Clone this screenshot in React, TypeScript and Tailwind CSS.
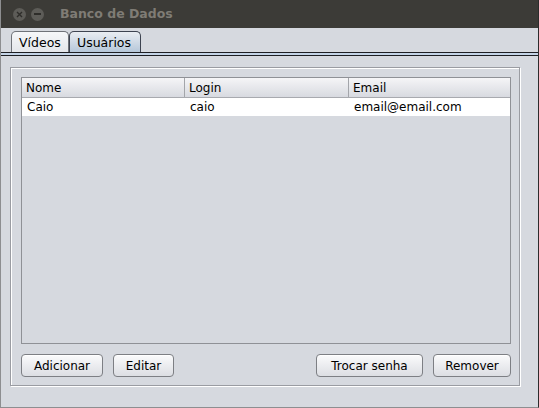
import React from "react";

const font = { fontFamily: '"DejaVu Sans", Verdana, sans-serif' };

const Button = ({ label, width }: { label: string; width: string }) => (
  <button
    className={`h-[23px] ${width} rounded-[4px] border border-[#7d7f84] bg-gradient-to-b from-[#fbfbfc] to-[#dcdee3] text-[12px] text-black shadow-[inset_0_1px_0_#fff]`}
  >
    {label}
  </button>
);

const columns = [
  { name: "Nome", width: "w-[163px]" },
  { name: "Login", width: "w-[164px]" },
  { name: "Email", width: "flex-1" },
];

const rows = [["Caio", "caio", "email@email.com"]];

export default function App() {
  return (
    <div
      style={font}
      className="w-[539px] h-[408px] bg-[#d6d9df] flex flex-col border-l border-l-[#8d8e90] border-r border-r-[#2c2c2c] border-b border-b-[#8d8e90] overflow-hidden"
    >
      {/* title bar */}
      <div className="h-[28px] bg-[#3c3b37] flex items-center shrink-0">
        <div className="ml-[12px] w-[13px] h-[13px] rounded-full bg-[#5d5c58] flex items-center justify-center">
          <svg width="7" height="7" viewBox="0 0 7 7">
            <path d="M1 1 L6 6 M6 1 L1 6" stroke="#2e2d2a" strokeWidth="1.4" />
          </svg>
        </div>
        <div className="ml-[5px] w-[13px] h-[13px] rounded-full bg-[#5d5c58] flex items-center justify-center">
          <div className="w-[7px] h-[1.5px] bg-[#2e2d2a]" />
        </div>
        <span className="ml-[16px] text-[12.5px] font-bold text-[#7f7c75]">Banco de Dados</span>
      </div>

      {/* tabs */}
      <div className="h-[24px] flex items-end pl-[10px] shrink-0">
        <div className="h-[21px] w-[58px] rounded-t-[5px] border border-b-0 border-[#6f7278] bg-gradient-to-b from-[#f6f7f9] to-[#e4e6ea] text-[12.5px] text-black pl-[7px] pt-[2px]">
          Vídeos
        </div>
        <div className="h-[21px] w-[72px] rounded-t-[5px] border border-b-0 border-[#3d4350] bg-gradient-to-b from-[#e9edf2] to-[#b6c7d9] text-[12.5px] text-black pl-[7px] pt-[2px]">
          Usuários
        </div>
      </div>
      <div className="h-[1px] bg-[#1d1e22] shrink-0" />
      <div className="h-[2px] bg-[#c3d3e6] shrink-0" />
      <div className="h-[1px] bg-[#1d1e22] shrink-0" />

      {/* content */}
      <div className="pt-[11px] pl-[9px]">
        <div className="w-[510px] h-[319px] border border-[#9a9ca2] shadow-[inset_1px_1px_0_#fff,1px_1px_0_#fff] flex flex-col pt-[9px] pl-[10px] pr-[8px]">
          <div className="h-[267px] border border-[#8f9196] bg-[#d6d9df] flex flex-col">
            <div className="h-[20px] flex bg-gradient-to-b from-[#f5f5f7] to-[#d8dae0] border-b border-[#a8aaaf]">
              {columns.map((c, i) => (
                <div
                  key={c.name}
                  className={`${c.width} h-full flex items-center pl-[4px] text-[12px] text-black ${
                    i < columns.length - 1 ? "border-r border-[#a3a5aa]" : ""
                  }`}
                >
                  {c.name}
                </div>
              ))}
            </div>
            {rows.map((r, ri) => (
              <div key={ri} className="h-[18px] flex bg-white">
                {r.map((v, i) => (
                  <div
                    key={i}
                    className={`${columns[i].width} h-full flex items-center pl-[5px] text-[12px] text-black`}
                  >
                    {v}
                  </div>
                ))}
              </div>
            ))}
          </div>
          <div className="mt-[10px] flex">
            <Button label="Adicionar" width="w-[82px]" />
            <div className="w-[10px]" />
            <Button label="Editar" width="w-[61px]" />
            <div className="flex-1" />
            <Button label="Trocar senha" width="w-[107px]" />
            <div className="w-[10px]" />
            <Button label="Remover" width="w-[78px]" />
          </div>
        </div>
      </div>
    </div>
  );
}
